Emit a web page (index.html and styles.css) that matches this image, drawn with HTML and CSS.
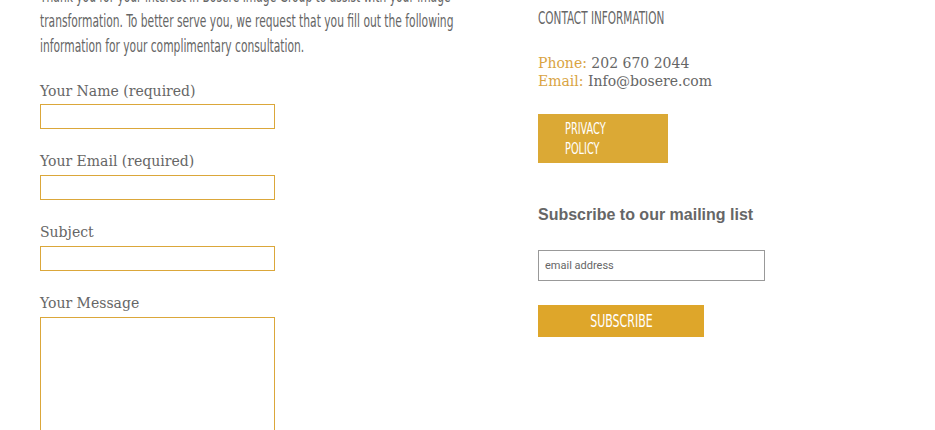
FILE: index.html
```html
<!DOCTYPE html>
<html lang="en">
<head>
    <meta charset="UTF-8">
    <meta name="viewport" content="width=device-width, initial-scale=1.0">
    <title>Contact</title>
    <link rel="stylesheet" href="styles.css">
</head>
<body>
    <div id="wrapper">
        <div id="left">
            <p class="intro"><span class="narrow">Thank you for your interest in Bosere Image Group to assist with your image<br>
            transformation. To better serve you, we request that you fill out the following<br>
            information for your complimentary consultation.</span></p>
            <form id="contact_form">
                <div class="field">
                    <label>Your Name (required)</label>
                    <input type="text">
                </div>
                <div class="field">
                    <label>Your Email (required)</label>
                    <input type="text">
                </div>
                <div class="field">
                    <label>Subject</label>
                    <input type="text">
                </div>
                <div class="field">
                    <label>Your Message</label>
                    <textarea></textarea>
                </div>
            </form>
        </div>
        <div id="right">
            <h3 class="contact_title"><span class="narrow">CONTACT INFORMATION</span></h3>
            <div class="contact_info">
                <div><span class="gold">Phone:</span> 202 670 2044</div>
                <div><span class="gold">Email:</span> Info@bosere.com</div>
            </div>
            <a class="privacy_btn" href="#"><span class="narrow">PRIVACY<br>POLICY</span></a>
            <h3 class="subscribe_title">Subscribe to our mailing list</h3>
            <input class="email_box" type="text" placeholder="email address">
            <button class="subscribe_btn"><span class="narrow">SUBSCRIBE</span></button>
        </div>
    </div>
</body>
</html>
```
FILE: styles.css
```css
body{
    margin: 0;
    background-color: #fff;
    color: #666;
}
#wrapper{
    display: grid;
    grid-template-columns: 498px 1fr;
    padding-left: 40px;
    height: 430px;
    overflow: hidden;
}
.narrow{
    display: inline-block;
    white-space: nowrap;
    font-family: "DejaVu Sans Condensed", "DejaVu Sans", sans-serif;
    transform: scaleX(0.7);
    transform-origin: left center;
}
.intro{
    margin: -16px 0 0 0;
    font-size: 17px;
    line-height: 25px;
    color: #666;
}
#contact_form{
    margin-top: 22px;
}
.field{
    margin-bottom: 22px;
}
.field label{
    display: block;
    font-family: "DejaVu Serif", serif;
    font-size: 14px;
    line-height: 20px;
    margin-bottom: 4px;
    color: #666;
}
.field input, .field textarea{
    display: block;
    box-sizing: border-box;
    width: 235px;
    height: 25px;
    border: 1px solid #dba73a;
    margin: 0;
    padding: 2px 4px;
}
.field:first-child input{
    margin-top: -1px;
}
.field textarea{
    height: 140px;
    resize: none;
}
#right{
    display: flex;
    flex-direction: column;
    align-items: flex-start;
}
.contact_title{
    margin: 8px 0 0 0;
    font-weight: normal;
    font-size: 17px;
    line-height: 20px;
    color: #666;
}
.contact_title .narrow{
    transform: scaleX(0.685);
}
.contact_info{
    margin-top: 25px;
    font-family: "DejaVu Serif", serif;
    font-size: 14px;
    line-height: 18px;
    color: #666;
}
.gold{
    color: #d9a443;
}
.privacy_btn{
    box-sizing: border-box;
    margin-top: 24px;
    width: 130px;
    height: 49px;
    padding: 5px 0 0 27px;
    background-color: #dba935;
    color: #fff;
    text-decoration: none;
    font-size: 16px;
    line-height: 20px;
}
.privacy_btn .narrow{
    transform: scaleX(0.68);
}
.subscribe_title{
    margin: 42px 0 0 0;
    font-family: "Liberation Sans", sans-serif;
    font-size: 16px;
    line-height: 20px;
    font-weight: bold;
    color: #666;
}
.email_box{
    box-sizing: border-box;
    margin-top: 25px;
    width: 227px;
    height: 31px;
    border: 1px solid #999;
    padding: 0 6px;
    font-family: Roboto, sans-serif;
    font-size: 11px;
    color: #666;
}
.email_box::placeholder{
    color: #666;
}
.subscribe_btn{
    margin-top: 24px;
    width: 166px;
    height: 32px;
    padding: 0;
    border: none;
    background-color: #dea62a;
    color: #fff;
    font-size: 17px;
}
.subscribe_btn .narrow{
    transform: scaleX(0.72);
    transform-origin: center center;
}
```
